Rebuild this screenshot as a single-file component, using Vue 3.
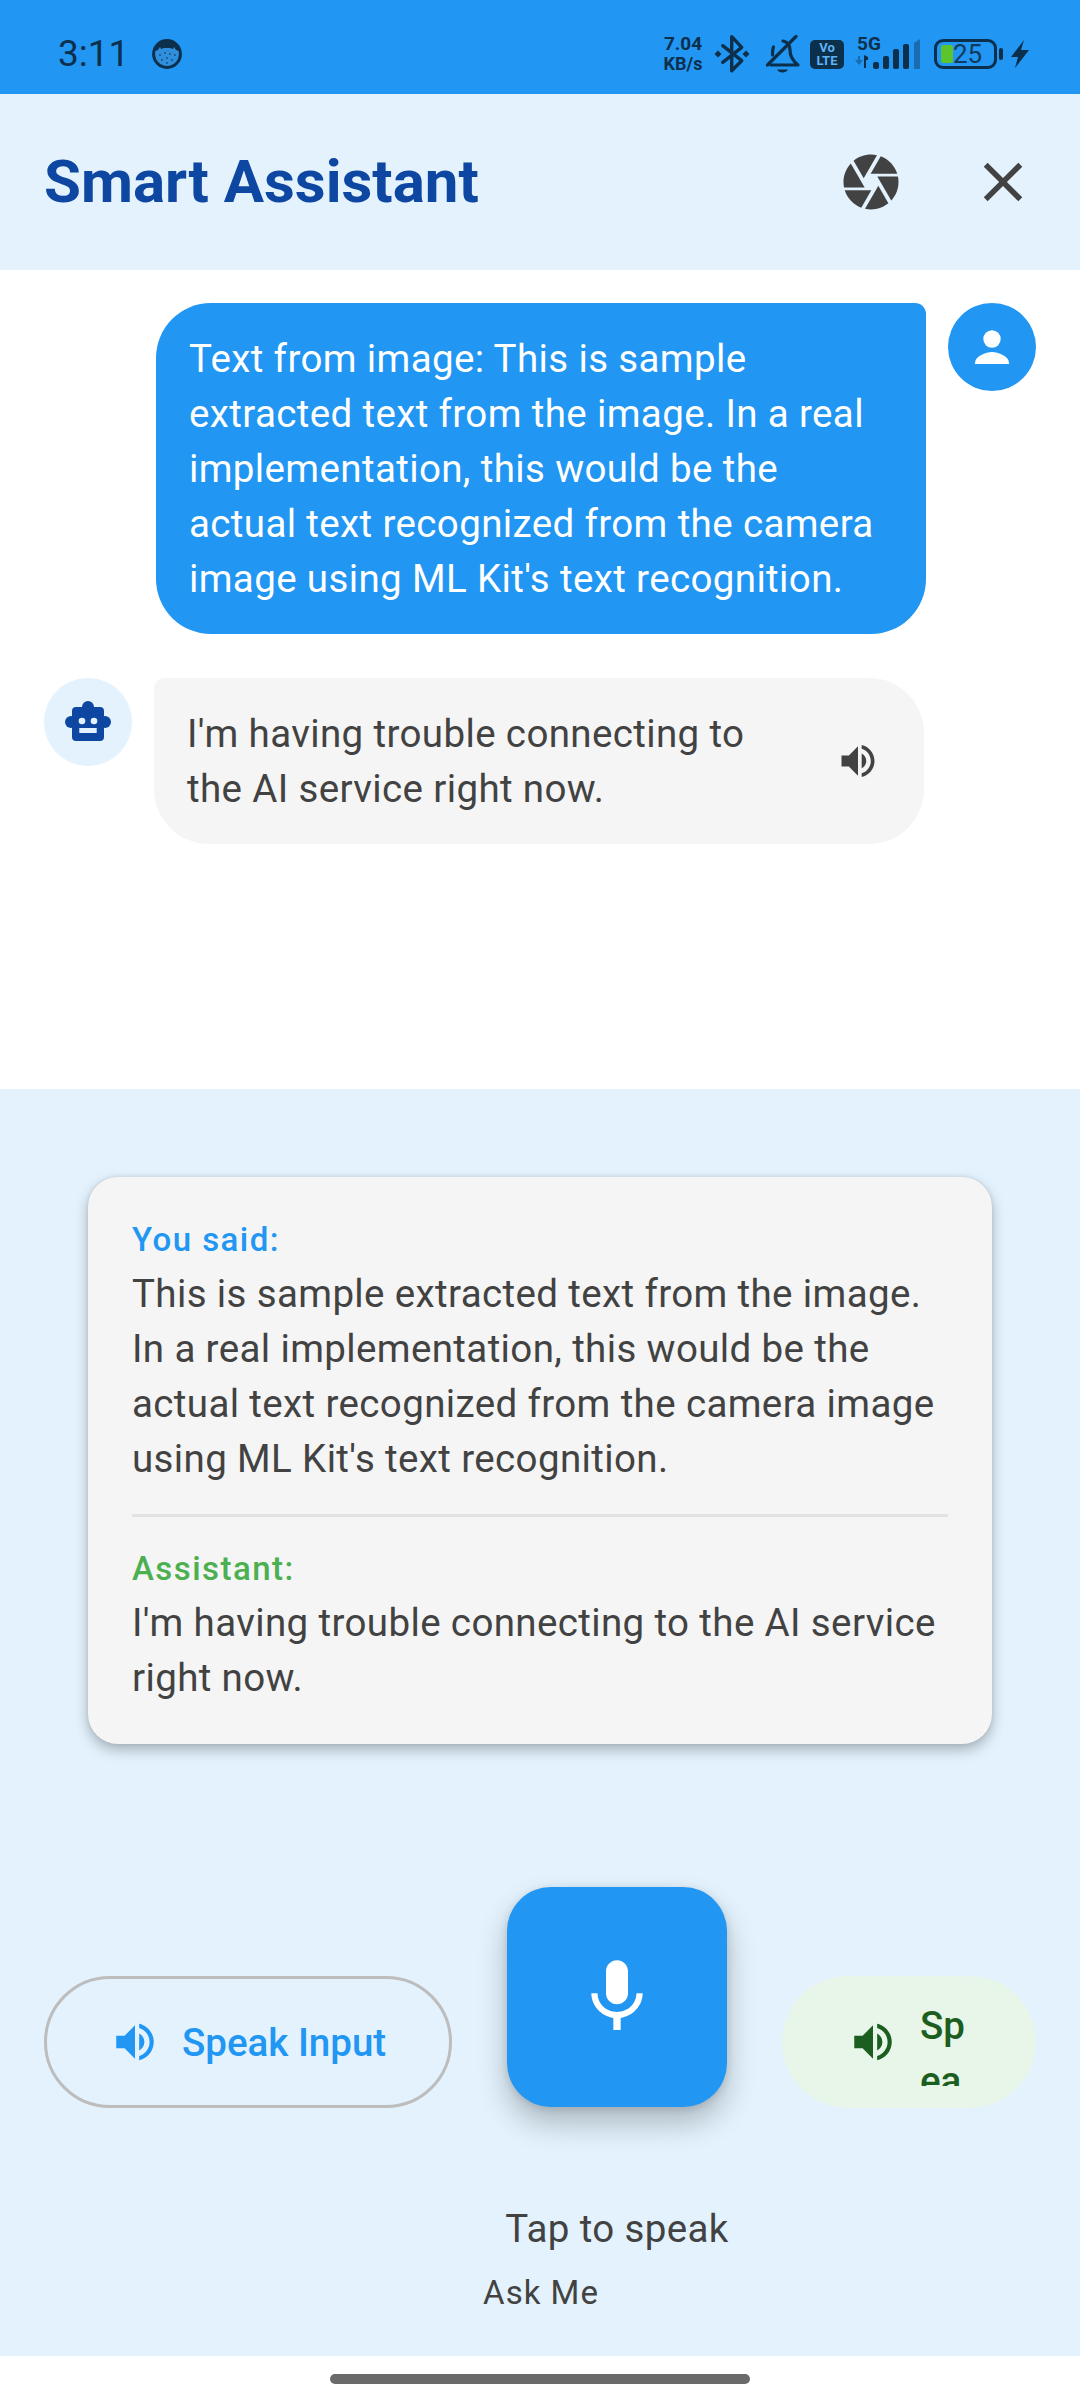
<template>
  <div class="screen">
    <div class="status-bar">
      <span class="status-time">3:11</span>
      <svg class="status-face" viewBox="0 0 30 30">
        <circle cx="15" cy="15" r="13.4" fill="#2f8fdc" stroke="#0c2f4c" stroke-width="3" />
        <path d="M3 12C5 4 10 1.500 15 1.500S25 4 27 12l-3-1-2-3-1 2-3-1h-6l-3 1-1-2-2 3z" fill="#0c2f4c" />
        <g fill="#16507f">
          <circle cx="8" cy="16" r=".9" /><circle cx="13" cy="14" r=".9" /><circle cx="18" cy="15" r=".9" />
          <circle cx="23" cy="16" r=".9" /><circle cx="10" cy="21" r=".9" /><circle cx="15" cy="19" r=".9" />
          <circle cx="20" cy="21" r=".9" /><circle cx="15" cy="24" r=".9" />
        </g>
      </svg>
      <div class="status-right">
        <div class="net-speed"><span>7.04</span><span class="net-unit">KB/s</span></div>
        <svg class="status-bt" viewBox="0 0 36 39">
          <path d="M8.7 10.7l19 15-10 10V1.7l10 10.6-19 15" fill="none" stroke="#0c2f4c" stroke-width="3.4" stroke-linejoin="round" stroke-linecap="round" />
          <path d="M4 15.5L7.5 19 4 22.5.5 19zM32 15.5l3.5 3.5-3.5 3.5-3.5-3.5z" fill="#0c2f4c" />
        </svg>
        <svg class="status-bell" viewBox="0 0 36 38">
          <path d="M18 6c4 .8 7 4 7 9 0 6 3 11 8 15H6M7.500 20c0-3 0-6 1-8" fill="none" stroke="#0c2f4c" stroke-width="3.2" stroke-linejoin="round" stroke-linecap="round" />
          <path d="M2.500 30L31 1.500" stroke="#0c2f4c" stroke-width="3.2" stroke-linecap="round" />
          <path d="M12 34.500h11c-1 2-3 3-5.500 3s-4.500-1-5.500-3z" fill="#0c2f4c" />
        </svg>
        <div class="volte"><span>Vo</span><span>LTE</span></div>
        <div class="signal">
          <span class="signal-5g">5G</span>
          <svg viewBox="0 0 67 30" width="67" height="30">
            <path d="M2 21h3v-4h2v4h3l-4 5z" fill="#1a6bb0" />
            <path d="M11 29V16l4 2v3h-2v8z" fill="#0c2f4c" />
            <rect x="20" y="23" width="6" height="7" rx="2" fill="#0c2f4c" />
            <rect x="30" y="17" width="6" height="13" rx="2" fill="#0c2f4c" />
            <rect x="40" y="10" width="6" height="20" rx="2" fill="#0c2f4c" />
            <rect x="50" y="5" width="6" height="25" rx="2" fill="#0c2f4c" />
            <path d="M61 4l6-4v30h-6z" fill="#1a6bb0" />
          </svg>
        </div>
        <div class="battery">
          <span class="battery-fill"></span>
          <span class="battery-num">25</span>
        </div>
        <span class="battery-nub"></span>
        <svg class="status-bolt" viewBox="0 0 20 28">
          <path d="M14 0L1 17h7L5 28l14-18h-8z" fill="#0c2f4c" />
        </svg>
      </div>
    </div>

    <header class="app-bar">
      <h1 class="app-title">Smart Assistant</h1>
      <svg class="bar-icon" viewBox="0 0 24 24">
        <path d="M9.400 10.500l4.770-8.260C13.470 2.090 12.750 2 12 2c-2.400 0-4.600.85-6.320 2.250l3.660 6.350.06-.1zM21.540 9c-.92-2.920-3.150-5.260-6-6.340L11.880 9h9.660zm.26 1h-7.490l.29.5 4.760 8.250C21 16.970 22 14.610 22 12c0-.69-.07-1.350-.2-2zM8.540 12l-3.900-6.750C3.010 7.030 2 9.390 2 12c0 .69.07 1.350.2 2h7.490l-1.150-2zm-6.080 3c.92 2.920 3.150 5.260 6 6.340L12.120 15H2.460zm11.270 0l-3.900 6.760c.7.15 1.420.24 2.170.24 2.400 0 4.600-.85 6.320-2.250l-3.660-6.350-.93 1.600z" />
      </svg>
      <svg class="bar-icon" viewBox="0 0 24 24">
        <path d="M19 6.410L17.590 5 12 10.590 6.410 5 5 6.410 10.590 12 5 17.590 6.410 19 12 13.410 17.590 19 19 17.590 13.410 12z" />
      </svg>
    </header>

    <section class="chat">
      <div class="msg msg--user">
        <div class="bubble bubble--user">{{ userMessage }}</div>
        <svg class="avatar avatar--user" viewBox="0 0 88 88">
          <circle cx="44" cy="36" r="8.700" fill="#fff" />
          <path d="M27 61v-1c0-7 11-11 17-11s17 4 17 11v1z" fill="#fff" />
        </svg>
      </div>
      <div class="msg">
        <svg class="avatar avatar--bot" viewBox="0 0 88 88">
          <circle cx="44" cy="29" r="6" fill="#0D47A1" />
          <circle cx="27" cy="44" r="6" fill="#0D47A1" />
          <circle cx="61" cy="44" r="6" fill="#0D47A1" />
          <rect x="28" y="29" width="32" height="34" rx="4" fill="#0D47A1" />
          <circle cx="38" cy="43" r="3.300" fill="#E3F2FD" />
          <circle cx="50" cy="43" r="3.300" fill="#E3F2FD" />
          <rect x="35.300" y="50" width="17.400" height="5" fill="#E3F2FD" />
        </svg>
        <div class="bubble bubble--bot">
          <span class="bubble-text">{{ botMessage }}</span>
          <span class="bubble-speak">
            <svg class="speaker" viewBox="0 0 24 24"><path :d="speakerPath" /></svg>
          </span>
        </div>
      </div>
    </section>

    <section class="panel">
      <div class="card">
        <div class="card-label card-label--you">You said:</div>
        <p class="card-text">{{ heardText }}</p>
        <div class="card-divider"></div>
        <div class="card-label card-label--bot">Assistant:</div>
        <p class="card-text">{{ botMessage }}</p>
      </div>

      <div class="controls">
        <button class="pill pill--outline" type="button">
          <svg class="pill-icon" viewBox="0 0 24 24"><path :d="speakerPath" /></svg>
          <span>Speak Input</span>
        </button>
        <div class="mic-col">
          <button class="mic-btn" type="button">
            <svg class="mic-icon" viewBox="0 0 24 24">
              <path d="M12 14c1.660 0 3-1.340 3-3V5c0-1.660-1.340-3-3-3S9 3.340 9 5v6c0 1.660 1.340 3 3 3zm5.300-3c0 3-2.540 5.100-5.300 5.100S6.700 14 6.700 11H5c0 3.410 2.720 6.230 6 6.720V21h2v-3.280c3.280-.48 6-3.300 6-6.720h-1.700z" />
            </svg>
          </button>
          <span class="mic-hint">Tap to speak</span>
        </div>
        <button class="pill pill--green" type="button">
          <svg class="pill-icon" viewBox="0 0 24 24"><path :d="speakerPath" /></svg>
          <span class="pill-clip">Speak Output</span>
        </button>
      </div>

      <div class="ask-me">Ask Me</div>
    </section>

    <footer class="nav-bar"><span class="nav-handle"></span></footer>
  </div>
</template>

<script setup>
const userMessage =
  "Text from image: This is sample extracted text from the image. In a real implementation, this would be the actual text recognized from the camera image using ML Kit's text recognition."
const heardText =
  "This is sample extracted text from the image. In a real implementation, this would be the actual text recognized from the camera image using ML Kit's text recognition."
const botMessage = "I'm having trouble connecting to the AI service right now."
const speakerPath =
  'M3 9v6h4l5 5V4L7 9H3zm13.500 3c0-1.770-1.020-3.290-2.500-4.030v8.050c1.480-.73 2.500-2.250 2.500-4.020zM14 3.230v2.060c2.890.86 5 3.540 5 6.710s-2.110 5.850-5 6.710v2.060c4.010-.91 7-4.490 7-8.770 0-4.280-2.990-7.860-7-8.770z'
</script>

<style scoped>
.screen {
  width: 1080px;
  height: 2400px;
  display: flex;
  flex-direction: column;
  background: #fff;
  font-family: Roboto, "Noto Sans", sans-serif;
  color: #424242;
  overflow: hidden;
}

.status-bar {
  height: 94px;
  flex-shrink: 0;
  display: flex;
  align-items: center;
  background: #2196f3;
  color: #0c2f4c;
  padding: 14px 50px 0 58px;
  box-sizing: border-box;
}

.status-time {
  font-size: 37px;
  line-height: 44px;
  width: 94px;
}

.status-face {
  width: 30px;
  height: 30px;
}

.status-right {
  margin-left: auto;
  display: flex;
  align-items: center;
}

.net-speed {
  display: flex;
  flex-direction: column;
  align-items: center;
  width: 42px;
  font-size: 19px;
  line-height: 20px;
  font-weight: 700;
  white-space: nowrap;
}

.net-unit {
  font-size: 18px;
}

.status-bt {
  width: 36px;
  height: 39px;
  margin-left: 10px;
}

.status-bell {
  width: 36px;
  height: 38px;
  margin-left: 15px;
}

.volte {
  width: 34px;
  height: 29px;
  margin-left: 9px;
  background: #0c2f4c;
  border-radius: 5px;
  color: #5fb4f5;
  display: flex;
  flex-direction: column;
  align-items: center;
  justify-content: center;
  font-size: 13px;
  line-height: 13px;
  font-weight: 700;
}

.signal {
  position: relative;
  width: 67px;
  height: 30px;
  margin-left: 9px;
}

.signal-5g {
  position: absolute;
  left: 4px;
  top: -5px;
  font-size: 19px;
  line-height: 20px;
  font-weight: 700;
}

.battery {
  width: 63px;
  height: 30px;
  margin-left: 14px;
  box-sizing: border-box;
  border: 3px solid #0c2f4c;
  border-radius: 9px;
  display: flex;
  align-items: center;
  padding-left: 4px;
}

.battery-fill {
  width: 12px;
  height: 18px;
  background: #5cc52e;
  border-radius: 2px;
}

.battery-num {
  font-size: 26px;
  line-height: 24px;
  color: #12395c;
}

.battery-nub {
  width: 4px;
  height: 12px;
  margin-left: 2px;
  background: #0c2f4c;
  border-radius: 2px;
}

.status-bolt {
  width: 20px;
  height: 28px;
  margin-left: 7px;
}

.app-bar {
  height: 176px;
  flex-shrink: 0;
  display: flex;
  align-items: center;
  background: #e3f2fd;
  padding: 0 44px 0 44px;
  box-sizing: border-box;
}

.app-title {
  margin: 0 auto 0 0;
  font-size: 60px;
  font-weight: 700;
  color: #0d47a1;
  line-height: 82px;
}

.bar-icon {
  width: 66px;
  height: 66px;
  fill: #424242;
  margin-left: 66px;
}

.chat {
  height: 819px;
  flex-shrink: 0;
  box-sizing: border-box;
  padding: 33px 44px 0;
  display: flex;
  flex-direction: column;
  gap: 44.500px;
}

.msg {
  display: flex;
  align-items: flex-start;
  gap: 22px;
}

.msg--user {
  justify-content: flex-end;
}

.avatar {
  width: 88px;
  height: 88px;
  border-radius: 50%;
  flex-shrink: 0;
}

.avatar--user {
  background: #2196f3;
}

.avatar--bot {
  background: #e3f2fd;
}

.bubble {
  width: 770px;
  box-sizing: border-box;
  font-size: 38.5px;
  line-height: 55px;
  letter-spacing: 0.37px;
}

.bubble--user {
  background: #2196f3;
  color: #fff;
  padding: 27.750px 33px;
  border-radius: 55px 11px 55px 55px;
}

.bubble--bot {
  background: #f5f5f5;
  padding: 27.750px 22px 27.750px 33px;
  border-radius: 11px 55px 55px 55px;
  display: flex;
  align-items: center;
  gap: 22px;
}

.bubble-text {
  flex: 1;
}

.bubble-speak {
  width: 88px;
  height: 88px;
  display: flex;
  align-items: center;
  justify-content: center;
  flex-shrink: 0;
}

.speaker {
  width: 44px;
  height: 44px;
  fill: #424242;
}

.panel {
  flex: 1;
  background: #e3f2fd;
  padding-top: 88px;
  display: flex;
  flex-direction: column;
}

.card {
  margin: 0 88px;
  padding: 41px 44px 39px;
  background: #f5f5f5;
  border-radius: 30px;
  box-shadow: 0 6px 14px rgba(0, 0, 0, 0.26), 0 0 4px rgba(0, 0, 0, 0.1);
}

.card-label {
  font-size: 33px;
  line-height: 44px;
  font-weight: 500;
  letter-spacing: 1.45px;
}

.card-label--you {
  color: #2196f3;
}

.card-label--bot {
  color: #4caf50;
}

.card-text {
  margin: 4px 0 0;
  font-size: 38.5px;
  line-height: 55px;
  letter-spacing: 0.37px;
}

.card-divider {
  height: 3px;
  background: #e2e2e2;
  margin: 28px 0 30px;
}

.controls {
  margin-top: 143px;
  padding: 0 44px;
  display: flex;
  align-items: flex-start;
}

.pill {
  height: 132px;
  margin-top: 89px;
  border-radius: 66px;
  display: flex;
  align-items: center;
  justify-content: flex-start;
  font-family: inherit;
  font-size: 38.5px;
  font-weight: 500;
  line-height: 55px;
  box-sizing: border-box;
  flex-shrink: 0;
}

.pill--outline {
  width: 408px;
  background: transparent;
  border: 3px solid #bdbdbd;
  color: #2196f3;
  padding: 0 0 0 63px;
}

.pill--green {
  width: 254px;
  background: #e8f5e9;
  border: none;
  color: #1b5e20;
  padding: 0 0 0 66px;
}

.pill-icon {
  width: 50px;
  height: 50px;
  fill: currentColor;
  flex-shrink: 0;
  margin-right: 22px;
}

.pill-clip {
  width: 58px;
  height: 88px;
  overflow: hidden;
  word-break: break-all;
  text-align: left;
}

.mic-col {
  width: 220px;
  margin: 0 55px 0 55px;
  display: flex;
  flex-direction: column;
  align-items: center;
  flex-shrink: 0;
}

.mic-btn {
  width: 220px;
  height: 220px;
  border: none;
  padding: 0;
  background: #2196f3;
  border-radius: 44px;
  display: flex;
  align-items: center;
  justify-content: center;
  box-shadow: 0 16px 30px rgba(0, 0, 0, 0.24), 0 2px 8px rgba(0, 0, 0, 0.12);
}

.mic-icon {
  width: 88px;
  height: 88px;
  fill: #fff;
}

.mic-hint {
  margin-top: 94px;
  font-size: 38.5px;
  line-height: 55px;
  letter-spacing: 0.37px;
  white-space: nowrap;
}

.ask-me {
  margin-top: 15px;
  padding-left: 2px;
  text-align: center;
  font-size: 33px;
  line-height: 44px;
  letter-spacing: 1px;
}

.nav-bar {
  height: 44px;
  flex-shrink: 0;
  background: #fff;
  display: flex;
  justify-content: center;
  padding-top: 18px;
  box-sizing: border-box;
}

.nav-handle {
  width: 420px;
  height: 10px;
  border-radius: 5px;
  background: #6a6a6a;
}
</style>
